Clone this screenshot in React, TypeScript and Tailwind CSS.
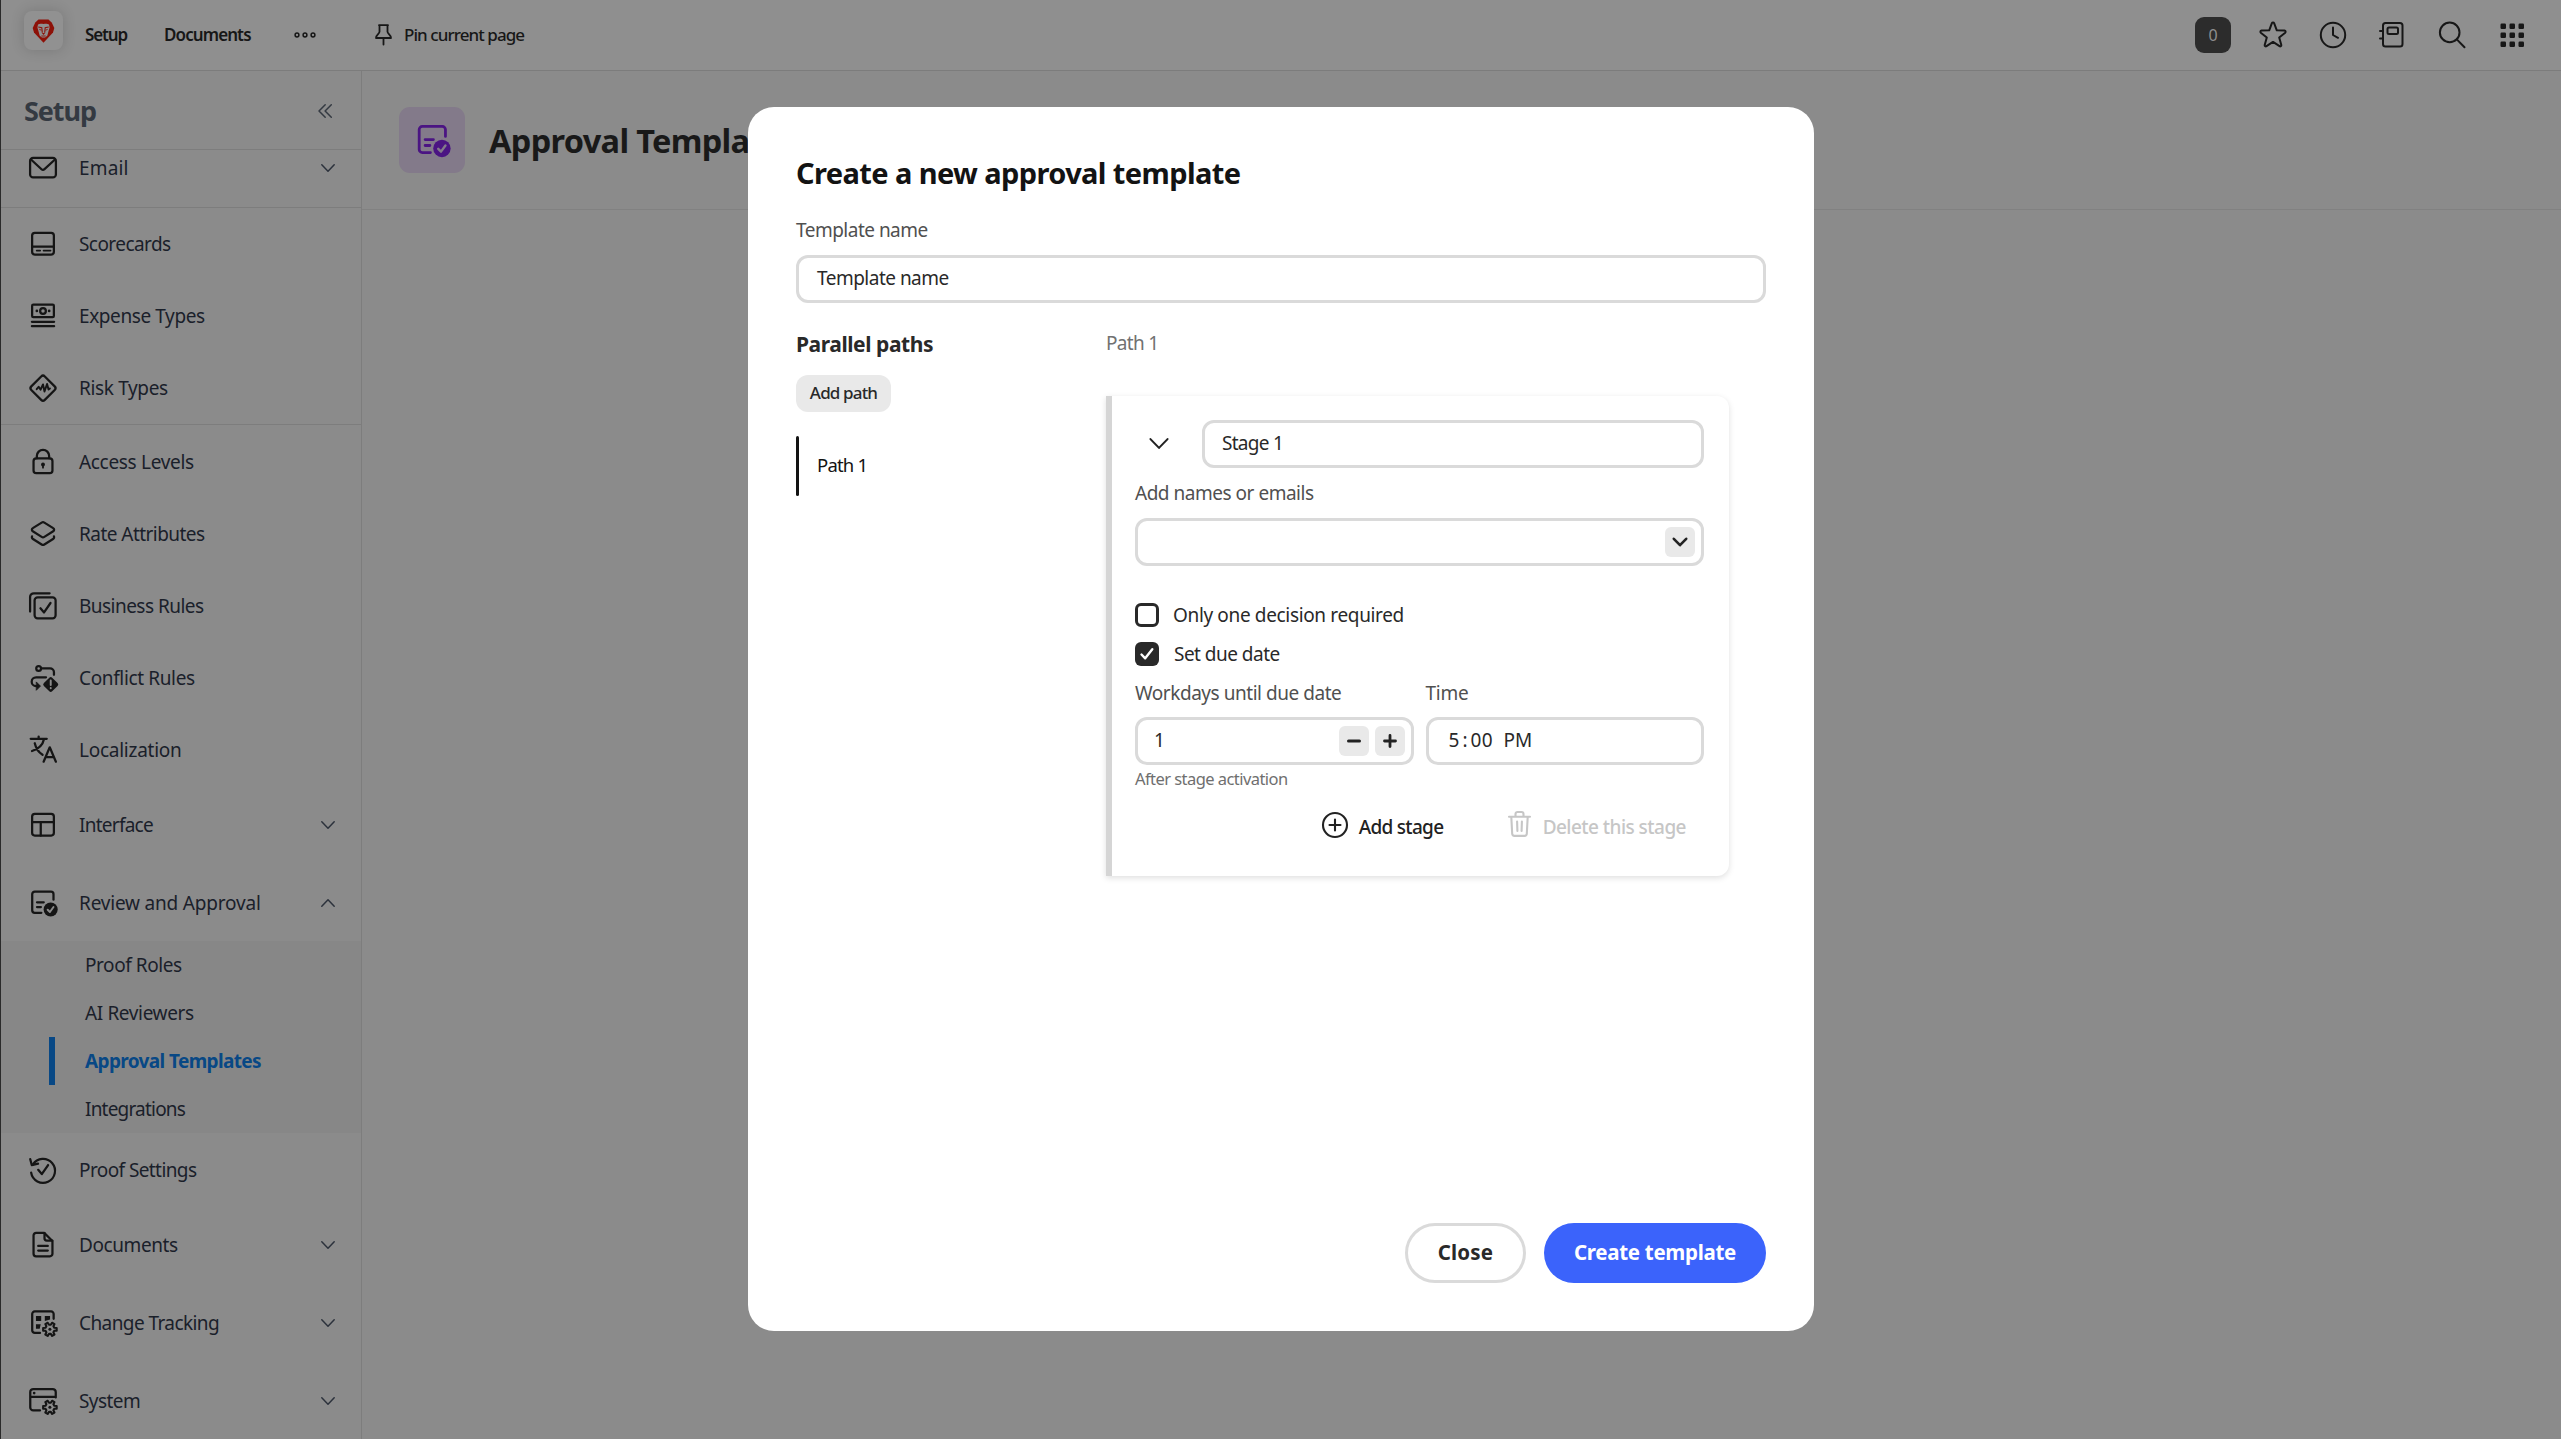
import type { ReactNode } from "react";

type IconName =
  | "email" | "scorecards" | "expense" | "risk" | "access" | "rate" | "business" | "conflict"
  | "localization" | "interface" | "review" | "proof" | "documents" | "change" | "system";

// Outline of a six-toothed gear around a centre point.
function gearPath(cx: number, cy: number): string {
  const points: string[] = [];
  for (let i = 0; i < 6; i++) {
    const base = (i * Math.PI) / 3;
    const steps: [number, number][] = [[-0.33, 3.1], [-0.2, 4.6], [0.2, 4.6], [0.33, 3.1]];
    for (const [offset, r] of steps) {
      points.push(`${(cx + r * Math.cos(base + offset)).toFixed(2)} ${(cy + r * Math.sin(base + offset)).toFixed(2)}`);
    }
  }
  return `M${points.join("L")}Z`;
}

const Gear = () => (
  <>
    <path d={gearPath(14.6, 14.2)} strokeWidth="1.4" />
    <circle cx="14.6" cy="14.2" r="1" fill="currentColor" stroke="none" />
  </>
);

const reviewShape = (checkClass: string) => (
  <>
    <path d="M17 7.8V4.1a1.7 1.7 0 0 0-1.7-1.7H4.5a1.7 1.7 0 0 0-1.7 1.7v10.7a1.7 1.7 0 0 0 1.7 1.7h4.4" />
    <path d="M6 9.5h4.5M6 12.7h2.6" />
    <circle cx="15.1" cy="14.3" r="4.7" fill="currentColor" stroke="none" />
    <path d="M13.1 14.5l1.500 1.500 2.400-3.300" className={checkClass} strokeWidth="1.3" />
  </>
);

const shapes: Record<IconName, ReactNode> = {
  email: (
    <>
      <rect x="1.4" y="3.3" width="17.2" height="13" rx="2" />
      <path d="M2 4.3l7 6.5a1.5 1.5 0 0 0 2 0l7-6.5" />
    </>
  ),
  scorecards: (
    <>
      <rect x="2.75" y="2.5" width="14.5" height="14.5" rx="1.8" />
      <path d="M2.75 11.7h14.5" />
      <path d="M5.8 14.4h2.3M10.4 14.4h4.6" strokeWidth="1.2" />
    </>
  ),
  expense: (
    <>
      <rect x="2.75" y="2.4" width="14.5" height="8.4" rx="0.8" />
      <circle cx="10" cy="6.6" r="1.9" />
      <path d="M2.6 13.9h14.8M2.6 16.8h14.8" />
      <circle cx="5.9" cy="6.6" r="0.9" fill="currentColor" stroke="none" />
      <circle cx="14.1" cy="6.6" r="0.9" fill="currentColor" stroke="none" />
    </>
  ),
  risk: (
    <>
      <path d="M8.8 2.3a1.7 1.7 0 0 1 2.4 0l6.6 6.6a1.7 1.7 0 0 1 0 2.4l-6.6 6.6a1.7 1.7 0 0 1-2.4 0L2.2 11.3a1.7 1.7 0 0 1 0-2.4z" />
      <path d="M5.8 10.8l1.300-1.600 1.300 1.900L10 7.600l1 4.700 1.700-5 1 3.700.9-.7" strokeWidth="1.3" />
    </>
  ),
  access: (
    <>
      <rect x="3.7" y="7.6" width="12.6" height="9.8" rx="1.8" />
      <path d="M5.9 7.5V6a4.1 4.1 0 0 1 8.2 0v1.5" />
      <circle cx="10" cy="11.7" r="1.3" fill="currentColor" stroke="none" />
      <path d="M10 12v1.8" strokeWidth="1.2" />
    </>
  ),
  rate: (
    <>
      <path d="M9.1 2.4a1.7 1.7 0 0 1 1.8 0l5.9 3.7a1.2 1.2 0 0 1 0 2.1l-5.9 3.7a1.7 1.7 0 0 1-1.8 0L3.2 8.2a1.2 1.2 0 0 1 0-2.1z" />
      <path d="M2.7 11.6c-.2.7 0 1.4.6 1.7l5.8 3.7a1.7 1.7 0 0 0 1.8 0l5.8-3.7c.6-.3.8-1 .6-1.7" />
    </>
  ),
  business: (
    <>
      <path d="M1.4 13.7V4a2.5 2.5 0 0 1 2.5-2.5h10.5" />
      <rect x="4.4" y="4.2" width="14" height="14" rx="2" />
      <path d="M8.3 11.5l2.4 2.8 4.3-6.3" />
    </>
  ),
  conflict: (
    <>
      <circle cx="7.1" cy="3.6" r="1.6" />
      <path d="M9 3.6h5.7a2.6 2.6 0 0 1 2.6 2.6v1.7" />
      <path d="M12 9.5H5.4a2.9 2.9 0 0 0 0 5.9h1.4" />
      <path d="M5.7 12.8l2.6 2.6-2.6 2.6z" fill="currentColor" strokeWidth="0.6" />
      <path d="M14.2 9.9a1.3 1.3 0 0 1 1.9 0l3.6 3.5a1.3 1.3 0 0 1 0 1.900l-3.600 3.500a1.300 1.300 0 0 1-1.900 0l-3.600-3.500a1.300 1.300 0 0 1 0-1.900z" fill="currentColor" stroke="none" />
      <path d="M15.15 11.7v2.9M15.15 16.7v.1" className="stroke-[#8b8b8b]" strokeWidth="1.3" />
    </>
  ),
  localization: (
    <>
      <path d="M1.8 2.5h10.7M7.1 1v1.4M10.7 2.7c-.9 4.3-3.5 6.6-8 8M4.5 5.5c.8 3.4 2.5 6 5.2 7.7" />
      <path d="M10.4 17.8l4.1-9.6 4.1 9.6M11.9 14.8h5.3" />
    </>
  ),
  interface: (
    <>
      <rect x="2.75" y="2.5" width="14.5" height="14.5" rx="1.8" />
      <path d="M2.75 8h14.5M8.5 8v9" />
    </>
  ),
  review: reviewShape("stroke-[#8b8b8b]"),
  proof: (
    <>
      <path d="M3.3 6.2a8 8 0 1 1-1.2 5.6" />
      <path d="M1.5 2.8l1 3.9 4.2-.9" />
      <path d="M6.8 9.9l2.4 2.8 4.2-6" />
    </>
  ),
  documents: (
    <>
      <path d="M10.8 1.9H5.4a1.7 1.7 0 0 0-1.7 1.7v12.2a1.7 1.7 0 0 0 1.7 1.7h9.2a1.7 1.7 0 0 0 1.7-1.7V7.3z" />
      <path d="M11 2v3.5a1.5 1.5 0 0 0 1.5 1.5h3.7M6.8 10.6h6.4M6.8 13.7h6.4" />
    </>
  ),
  change: (
    <>
      <path d="M17.1 7.2V4a1.7 1.7 0 0 0-1.7-1.7H4.5A1.7 1.7 0 0 0 2.8 4v10.900a1.700 1.700 0 0 0 1.700 1.700H8" />
      <path d="M5.3 5.3h3.5v3.400H5.3zM11.200 5.300h3.500v2.300l-3.500 1zM5.300 10.900h3.200l-.7 3H5.300z" fill="currentColor" stroke="none" />
      <Gear />
    </>
  ),
  system: (
    <>
      <path d="M18.5 7.6V4a2 2 0 0 0-2-2h-13a2 2 0 0 0-2 2v10.3a2 2 0 0 0 2 2H8M1.5 7.2h17" />
      <circle cx="4.1" cy="4.7" r="0.9" fill="currentColor" stroke="none" />
      <Gear />
    </>
  ),
};

function Stroke({ children, className, viewBox = "0 0 20 20", width = 1.5 }: { children: ReactNode; className: string; viewBox?: string; width?: number }) {
  return (
    <svg viewBox={viewBox} className={`shrink-0 overflow-visible ${className}`} fill="none" stroke="currentColor" strokeWidth={width} strokeLinecap="round" strokeLinejoin="round">
      {children}
    </svg>
  );
}

const Chevron = ({ className, width = 1.5 }: { className: string; width?: number }) => (
  <Stroke viewBox="0 0 14 8" className={className} width={width}>
    <path d="M0.8 0.8L7 7.2L13.2 0.8" />
  </Stroke>
);

type Item = { icon: IconName; label: string; track: string; row: string; chevron?: "down" | "up" };

const groups: Item[][] = [
  [
    { icon: "scorecards", label: "Scorecards", track: "tracking-[-0.57px]", row: "h-18" },
    { icon: "expense", label: "Expense Types", track: "tracking-[-0.4px]", row: "h-18" },
    { icon: "risk", label: "Risk Types", track: "tracking-[-0.35px]", row: "h-18" },
  ],
  [
    { icon: "access", label: "Access Levels", track: "tracking-[-0.32px]", row: "h-18" },
    { icon: "rate", label: "Rate Attributes", track: "tracking-[-0.54px]", row: "h-18" },
    { icon: "business", label: "Business Rules", track: "tracking-[-0.53px]", row: "h-18" },
    { icon: "conflict", label: "Conflict Rules", track: "tracking-[-0.36px]", row: "h-18" },
    { icon: "localization", label: "Localization", track: "tracking-[-0.26px]", row: "h-18" },
    { icon: "interface", label: "Interface", track: "tracking-[-0.74px]", row: "h-[78px]", chevron: "down" },
    { icon: "review", label: "Review and Approval", track: "tracking-[-0.19px]", row: "h-[77px]", chevron: "up" },
  ],
  [
    { icon: "proof", label: "Proof Settings", track: "tracking-[-0.59px]", row: "h-[73px]" },
    { icon: "documents", label: "Documents", track: "tracking-[-0.41px]", row: "h-[78px]", chevron: "down" },
    { icon: "change", label: "Change Tracking", track: "tracking-[-0.58px]", row: "h-[78px]", chevron: "down" },
    { icon: "system", label: "System", track: "tracking-[-0.56px]", row: "h-[78px]", chevron: "down" },
  ],
];

const subItems = [
  { label: "Proof Roles", style: "tracking-[-0.44px]" },
  { label: "AI Reviewers", style: "tracking-[-0.37px]" },
  { label: "Approval Templates", style: "tracking-[-0.63px] font-bold text-[#084885]", active: true },
  { label: "Integrations", style: "tracking-[-0.8px]" },
];

function NavRow({ item }: { item: Item }) {
  return (
    <div className={`flex shrink-0 items-center pl-[27px] pr-[26px] ${item.row}`}>
      <Stroke className="size-[30px] text-[#151515]">{shapes[item.icon]}</Stroke>
      <span className={`ml-[21px] flex-1 text-[19px] leading-7 ${item.track}`}>{item.label}</span>
      {item.chevron && (
        <Chevron className={`h-2 w-3.5 text-[#2c323c] ${item.chevron === "up" ? "rotate-180" : ""}`} />
      )}
    </div>
  );
}

function Lion() {
  return (
    <svg viewBox="0 0 22 24" className="h-6 w-[23px]">
      <path d="M6 .4h10l3.2 3.2L21.8 9l-1.300 4.600L11 23.700 1.500 13.600.2 9l2.600-5.400z" fill="#8d1108" />
      <path d="M5.500 5.600c1.500-1.300 3.500-.9 5.500-.5 2-.4 4-.8 5.500.5l.6 3-1.300 4.400-1 3.800-2.300 1.700h-3l-2.300-1.700-1-3.800-1.300-4.400z" fill="#8f8f8f" />
      <path d="M5.800 8l3.500.8.5 5M16.200 8l-3.500.8-.5 5" stroke="#8d1108" strokeWidth="1.100" fill="none" />
      <path d="M6.800 10.300l2 .9M15.200 10.300l-2 .9M8.800 17h4.400" stroke="#8d1108" strokeWidth="0.900" fill="none" />
      <path d="M9.400 14h3.200L11 15.900z" fill="#8d1108" />
    </svg>
  );
}

function TopBar() {
  return (
    <header className="flex h-[71px] shrink-0 items-center border-b border-[#7c7c7c] bg-[#8f8f8f] pb-px pl-[23px] pr-[37px] text-[17px] text-[#171717]">
      <div className="-mt-2 flex size-[39px] items-center justify-center rounded-lg bg-[#919191] shadow-[0_0_14px_rgba(0,0,0,0.16)]">
        <Lion />
      </div>
      <span className="ml-[22px] w-[79px] font-semibold tracking-[-1.15px]">Setup</span>
      <span className="w-[130px] font-semibold tracking-[-0.9px]">Documents</span>
      <svg viewBox="0 0 22 6" className="h-[6px] w-[22px]" fill="none" stroke="currentColor" strokeWidth="1.5">
        <circle cx="3" cy="3" r="1.9" />
        <circle cx="11" cy="3" r="1.9" />
        <circle cx="19" cy="3" r="1.9" />
      </svg>
      <Stroke viewBox="0 0 17 22" className="ml-[59px] h-[22px] w-[17px]" width={1.8}>
        <path d="M4 1.2h9M4.5 1.5v6.3c0 2-3.500 3-3.500 6.200h15c0-3.200-3.500-4.200-3.500-6.200V1.500M8.500 14v6.500" />
      </Stroke>
      <span className="ml-3 flex-1 font-medium tracking-[-0.93px]">Pin current page</span>

      <div className="flex items-center">
        <div className="flex size-9 items-center justify-center rounded-[9px] bg-[#2c2c2c] text-[16px] text-[#8f8f8f]">0</div>
        <Stroke viewBox="0 0 28 28" className="ml-[28px] size-7" width={2}>
          <path d="M12.9 2.1a1.2 1.2 0 0 1 2.2 0l2.7 7.2 7.7.3a1.2 1.2 0 0 1 .7 2.1l-6 4.8 2.1 7.4a1.2 1.2 0 0 1-1.8 1.3L14 20.9l-6.5 4.3a1.2 1.2 0 0 1-1.8-1.3l2.1-7.4-6-4.8a1.2 1.2 0 0 1 .7-2.100l7.700-.3z" />
        </Stroke>
        <Stroke viewBox="0 0 28 28" className="ml-8 size-7" width={2}>
          <circle cx="14" cy="14" r="12.2" />
          <path d="M14 6.5V14l5 2.8" />
        </Stroke>
        <Stroke viewBox="0 0 25 28" className="ml-8 h-7 w-[25px]" width={2}>
          <rect x="4" y="2" width="19.5" height="23.5" rx="2.5" />
          <rect x="8.5" y="6.5" width="10.5" height="6.5" rx="1.5" />
          <path d="M1 10h3M1 17.5h3" />
        </Stroke>
        <Stroke viewBox="0 0 28 28" className="ml-[34px] size-7" width={2}>
          <circle cx="11.7" cy="11.4" r="9.8" />
          <path d="M18.8 18.4l7.7 7.8" />
        </Stroke>
        <svg viewBox="0 0 24 24" className="ml-[34px] size-6" fill="currentColor">
          {[0, 9, 18].map((y) => [0, 9, 18].map((x) => <rect key={`${x}-${y}`} x={x + 0.5} y={y + 0.5} width="5.5" height="5.5" rx="1.2" />))}
        </svg>
      </div>
    </header>
  );
}

function Sidebar() {
  return (
    <aside className="flex w-[361px] shrink-0 flex-col overflow-hidden border-r border-[#7d7d7d] text-[#1a202a]">
      <div className="flex h-[78px] shrink-0 items-center justify-between pl-[23px] pr-[29px] pt-0.5">
        <h2 className="text-[27px] font-bold tracking-[-1.07px] text-[#343a42]">Setup</h2>
        <Stroke viewBox="0 0 14 14" className="size-3.5 text-[#343a42]" width={1.5}>
          <path d="M7.2.7L1 7l6.2 6.3M13.3.7L7.1 7l6.2 6.3" />
        </Stroke>
      </div>
      <div className="flex h-[59px] shrink-0 flex-col justify-end border-y border-[#7d7d7d]">
        <NavRow item={{ icon: "email", label: "Email", track: "tracking-[0.15px]", row: "h-[78px]", chevron: "down" }} />
      </div>
      {groups[0].map((item) => <NavRow key={item.label} item={item} />)}
      <div className="h-px shrink-0 bg-[#7d7d7d]" />
      <div className="h-px shrink-0" />
      {groups[1].map((item) => <NavRow key={item.label} item={item} />)}
      <div className="shrink-0 bg-[#878787]">
        {subItems.map((sub) => (
          <div key={sub.label} className="flex h-12 items-center pl-12">
            <div className={`h-full w-1.5 ${sub.active ? "bg-[#084885]" : ""}`} />
            <span className={`ml-[30px] text-[19px] leading-7 ${sub.style}`}>{sub.label}</span>
          </div>
        ))}
      </div>
      {groups[2].map((item) => <NavRow key={item.label} item={item} />)}
    </aside>
  );
}

const field = "flex h-12 items-center rounded-[12px] border-3 border-[#dadada] text-[19px] text-[#292929]";
const label = "h-7 text-[19px] leading-7 text-[#505050]";
const stepper = "flex h-[30px] w-[30px] items-center justify-center rounded-md bg-[#e9e9e9] text-[#222]";

function StageCard() {
  return (
    <section className="mt-[39px] h-[480px] w-[623px] rounded-r-[12px] border-l-6 border-[#d5d5d5] pl-[23px] pr-[25px] pt-6 shadow-[0_2px_6px_rgba(0,0,0,0.13)]">
      <div className="flex items-center">
        <Chevron className="ml-[14px] mr-[33px] h-[11px] w-[20px] text-[#222]" width={1.5} />
        <div className={`${field} flex-1 pl-[17px] tracking-[-0.72px]`}>Stage 1</div>
      </div>
      <p className={`${label} mt-[11px] tracking-[-0.48px]`}>Add names or emails</p>
      <div className={`${field} mt-[11px] justify-end pr-1.5`}>
        <div className={stepper}>
          <Chevron className="h-2 w-3.5" width={2.6} />
        </div>
      </div>
      <div className="mt-[30px] flex h-[39px] items-center">
        <span className="size-6 rounded-[6px] border-3 border-[#292929]" />
        <span className="ml-[14px] text-[19px] tracking-[-0.35px] text-[#292929]">Only one decision required</span>
      </div>
      <div className="flex h-[39px] items-center">
        <span className="flex size-6 items-center justify-center rounded-[6px] bg-[#292929] text-white">
          <Stroke viewBox="0 0 14 12" className="h-3 w-3.5" width={2.4}>
            <path d="M1.5 6.5L5.2 10.3L12.3 1.2" />
          </Stroke>
        </span>
        <span className="ml-[15px] text-[19px] tracking-[-0.52px] text-[#292929]">Set due date</span>
      </div>
      <div className="mt-[5px] flex gap-3">
        <div className="flex-1">
          <p className={`${label} tracking-[-0.46px]`}>Workdays until due date</p>
          <div className={`${field} mt-2.5 pl-4 pr-1.5`}>
            <span className="flex-1">1</span>
            <div className={`${stepper} mr-1.5`}>
              <Stroke viewBox="0 0 14 14" className="size-3.5" width={3}>
                <path d="M1.5 7h11" />
              </Stroke>
            </div>
            <div className={stepper}>
              <Stroke viewBox="0 0 14 14" className="size-3.5" width={2.8}>
                <path d="M1.5 7h11M7 1.5v11" />
              </Stroke>
            </div>
          </div>
          <p className="mt-0.5 h-6 text-[16.5px] leading-6 tracking-[-0.56px] text-[#6f6f6f]">After stage activation</p>
        </div>
        <div className="flex-1">
          <p className={`${label} tracking-[-0.24px]`}>Time</p>
          <div className={`${field} mt-2.5 pl-5`}>
            <span className="w-[14px]">5</span>
            <span className="w-[8px]">:</span>
            <span className="w-[33px] tracking-[0.4px]">00</span>
            <span>PM</span>
          </div>
        </div>
      </div>
      <div className="mt-[15px] flex h-10 items-center justify-end pr-[18px] text-[19px] font-medium text-[#222]">
        <Stroke viewBox="0 0 26 26" className="-mt-0.5 size-[26px]" width={2.1}>
          <circle cx="13" cy="13" r="12" />
          <path d="M13 7.5v11M7.5 13h11" />
        </Stroke>
        <span className="ml-[11px] mt-[3px] w-[149px] tracking-[-0.7px]">Add stage</span>
        <Stroke viewBox="0 0 23 26" className="-mt-1 h-[26px] w-[23px] text-[#c6c6c6]" width={2.1}>
          <path d="M1 5.7h21M7.5 5.5V3a2 2 0 0 1 2-2h4a2 2 0 0 1 2 2v2.5M3.3 6l.9 16.800a2.200 2.200 0 0 0 2.200 2.100h10.200a2.200 2.200 0 0 0 2.200-2.100L19.700 6M9.100 10.500l.3 9.500M13.900 10.500l-.3 9.500" />
        </Stroke>
        <span className="ml-3 mt-[3px] tracking-[-0.54px] text-[#c6c6c6]">Delete this stage</span>
      </div>
    </section>
  );
}

function Dialog() {
  return (
    <div role="dialog" className="flex h-[1224px] w-[1066px] flex-col rounded-[26px] bg-white px-12 pb-12 pt-[46px]">
      <h1 className="h-10 text-[29px] font-bold leading-10 tracking-[-0.6px] text-[#131313]">Create a new approval template</h1>
      <p className={`${label} mt-[23px] tracking-[-0.51px]`}>Template name</p>
      <div className={`${field} mt-[11px] pl-[18px] tracking-[-0.51px]`}>Template name</div>
      <div className="flex flex-1">
        <div className="w-[310px] pt-[27px]">
          <h3 className="h-7 text-[21px] font-bold leading-7 tracking-[-0.43px] text-[#292929]">Parallel paths</h3>
          <button className="mt-[17px] flex h-[37px] w-[95px] items-center justify-center rounded-[12px] bg-[#e9e9e9] text-[17px] font-medium tracking-[-0.85px] text-[#292929]">
            Add path
          </button>
          <div className="mt-6 flex h-[60px] items-center">
            <span className="h-full w-[3px] rounded-full bg-[#131313]" />
            <span className="ml-[18px] pb-0.5 text-[18.5px] tracking-[-0.8px] text-[#131313]">Path 1</span>
          </div>
        </div>
        <div className="flex-1 pt-[26px]">
          <p className="h-7 text-[19px] leading-7 tracking-[-0.7px] text-[#717171]">Path 1</p>
          <StageCard />
        </div>
      </div>
      <div className="flex h-15 justify-end gap-[18px] text-[20.5px] font-bold">
        <button className="w-[121px] rounded-full border-3 border-[#dadada] tracking-[0.2px] text-[#292929]">Close</button>
        <button className="w-[222px] rounded-full bg-[#3b63fb] tracking-[-0.3px] text-white">Create template</button>
      </div>
    </div>
  );
}

export default function App() {
  return (
    <div className="relative flex h-[1439px] w-[2561px] flex-col overflow-hidden border-l border-[#2a2a2a] bg-[#8b8b8b] font-['Noto_Sans',sans-serif]">
      <TopBar />
      <div className="flex min-h-0 flex-1">
        <Sidebar />
        <main className="flex-1">
          <div className="flex h-[139px] items-center border-b border-[#818181] pl-[37px]">
            <div className="flex size-[66px] items-center justify-center rounded-[11px] bg-[#837a8a] text-[#4b1483]">
              <Stroke className="size-[37px]">{reviewShape("stroke-[#837a8a]")}</Stroke>
            </div>
            <h1 className="ml-6 pt-[3px] text-[32.5px] font-bold tracking-[-0.68px] text-[#191919]">Approval Templates</h1>
          </div>
        </main>
      </div>
      <div className="absolute inset-0 flex items-center justify-center pb-0.5">
        <Dialog />
      </div>
    </div>
  );
}
